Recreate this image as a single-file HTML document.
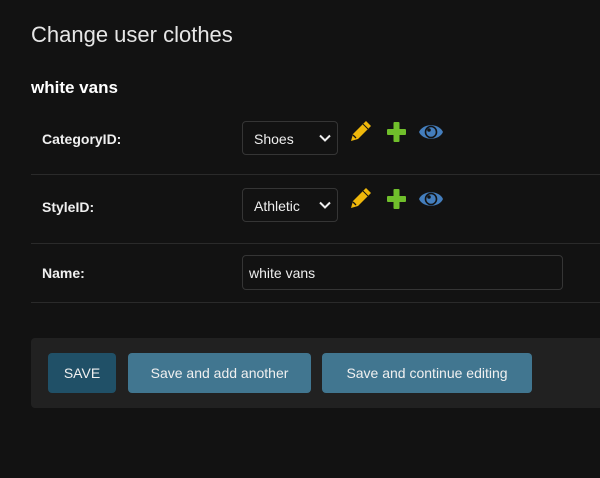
<!DOCTYPE html>
<html><head><style>
body{margin:0;background:#121212;width:600px;height:478px;overflow:hidden;font-family:"Liberation Sans",sans-serif;color:#f5f5f5;position:relative}
.a{position:absolute}
h1{position:absolute;left:31px;top:22px;margin:0;font-size:22px;font-weight:300;color:#e6e6e6}
h2{position:absolute;left:31px;top:78px;margin:0;font-size:17px;font-weight:bold;color:#fff}
.lbl{position:absolute;left:42px;font-size:14px;font-weight:bold;color:#f0f0f0}
.hr{position:absolute;left:31px;right:0;height:1px;background:#2a2a2a}
.sel{position:absolute;left:242px;width:96px;height:34px;border:1px solid #353535;border-radius:4px;box-sizing:border-box;font-size:14px;padding:9px 0 0 11px;color:#eee}
.sel svg{position:absolute;right:6px;top:12px}
.inp{position:absolute;left:242px;top:255px;width:321px;height:35px;border:1px solid #353535;border-radius:4px;box-sizing:border-box;font-size:14px;padding:9px 0 0 6px;color:#eee}
.btn{position:absolute;top:353px;height:40px;border-radius:4px;font-size:14px;color:#f0f0f0;text-align:center;line-height:40px;background:#417690}
</style></head><body>
<h1>Change user clothes</h1>
<h2>white vans</h2>
<div class="lbl" style="top:131px">CategoryID:</div>
<div class="sel" style="top:121px">Shoes<svg width="12" height="8"><path d="M1 1.5L6 6.5 11 1.5" stroke="#eee" stroke-width="2" fill="none"/></svg></div>
<div class="hr" style="top:174px"></div>
<div class="lbl" style="top:199px">StyleID:</div>
<div class="sel" style="top:188px">Athletic<svg width="12" height="8"><path d="M1 1.5L6 6.5 11 1.5" stroke="#eee" stroke-width="2" fill="none"/></svg></div>
<div class="hr" style="top:243px"></div>
<div class="lbl" style="top:265px">Name:</div>
<div class="inp">white vans</div>
<div class="hr" style="top:302px"></div>
<svg class="a" style="left:349px;top:120px" width="100" height="95">
<g id="ic">
<path d="M17 1l5 5-13 13-7 2 2-7z" fill="#efb80b"/><path d="M4 15l3 3" stroke="#121212" stroke-width="1.3"/><path d="M14 4l5 5" stroke="#121212" stroke-width="1"/>
<rect x="44.5" y="2" width="6" height="20" rx="1" fill="#70bf2b"/><rect x="38" y="9" width="19" height="6" rx="1" fill="#70bf2b"/>
<path d="M70 12C74 3 90 3 94 12C90 21 74 21 70 12Z" fill="#447ebd"/><circle cx="82" cy="12" r="5.5" fill="#447ebd" stroke="#121212" stroke-width="1.6"/><circle cx="80" cy="10" r="1.8" fill="#121212"/>
</g>
<use href="#ic" y="67"/>
</svg>
<div class="a" style="left:31px;top:338px;width:569px;height:70px;background:#212121;border-radius:4px 0 0 4px"></div>
<div class="btn" style="left:48px;width:68px;background:#205067">SAVE</div>
<div class="btn" style="left:128px;width:183px">Save and add another</div>
<div class="btn" style="left:322px;width:210px">Save and continue editing</div>
</body></html>
